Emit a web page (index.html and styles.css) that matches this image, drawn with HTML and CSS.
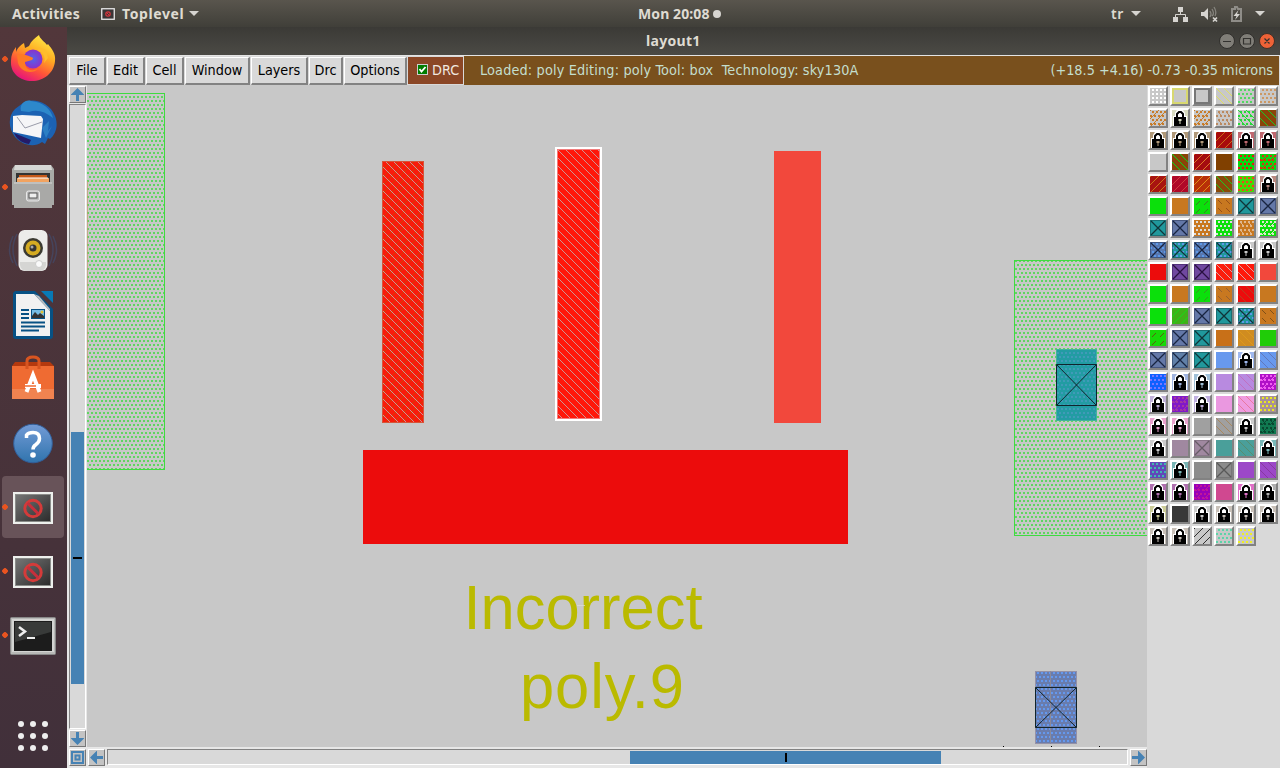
FILE: index.html
```html
<!DOCTYPE html>
<html lang="en">
<head>
<meta charset="utf-8">
<title>layout1</title>
<link rel="stylesheet" href="styles.css">
</head>
<body>
<header class="topbar">
  <span class="activities">Activities</span>
  <svg class="appicon" width="14" height="12" viewBox="0 0 14 12"><rect x=".75" y=".75" width="12.5" height="10.5" fill="#3a3536" stroke="#e8e8e8" stroke-width="1.3"/><circle cx="7" cy="6" r="2.2" fill="none" stroke="#d8353c" stroke-width="1.2"/><path d="M5.500 4.500l3 3" stroke="#d8353c"/></svg>
  <span class="appname">Toplevel</span>
  <i class="caret"></i>
  <span class="clock">Mon 20:08 <i class="dot"></i></span>
  <span class="lang">tr</span>
  <i class="caret"></i>
  <svg class="tray" width="74" height="18" viewBox="1170 4 74 18" fill="#d6d4d0">
    <path d="M1178 6h5v5h-5zM1173 16h5v5h-5zM1183 16h5v5h-5z"/><path d="M1180.500 11v2.500M1175.500 16v-2.500h10V16" fill="none" stroke="#d6d4d0"/>
    <path d="M1201 11h3l4-4v12l-4-4h-3z"/><path d="M1210 10q2 3 0 6M1212 8q3 5 0 7M1214 6q3 5 1 9" fill="none" stroke="#86847e" stroke-width="1.300"/><path d="M1213 16.500l4 4m0-4l-4 4" stroke="#d6d4d0" stroke-width="1.700"/>
    <path d="M1235 6h2l1 2h3v12h-9V8h3z" fill="none" stroke="#8f8d88" stroke-width="2"/><path d="M1238.500 9l-5 6h3l-1.500 4 5-6h-3z"/>
  </svg>
  <i class="caret last"></i>
</header>
<div class="desktop">
  <nav class="dock">
    <div class="slot run"><svg width="48" height="48" viewBox="0 0 48 48">
      <defs><linearGradient id="fx" x1=".8" y1="0" x2=".3" y2="1"><stop offset="0" stop-color="#fff04a"/><stop offset=".4" stop-color="#ffab22"/><stop offset=".7" stop-color="#ff5538"/><stop offset="1" stop-color="#e5117e"/></linearGradient><radialGradient id="fp"><stop offset="0" stop-color="#5263ea"/><stop offset="1" stop-color="#8b31c9"/></radialGradient></defs>
      <path d="M30 0c1 4 5 6 8 10l1-1c4 5 8 10 7 17-1 12-11 20-23 20S1 38 2 26c0-6 2-10 5-14l0 5c2-5 5-7 8-9l1 5 4-2c2-5 6-8 10-11z" fill="url(#fx)"/>
      <circle cx="24" cy="24" r="9.500" fill="url(#fp)"/>
      <path d="M8 20c5-2 10 0 14 2 2 1 3 1 1 3l-7 2c0 7 5 10 13 7-5 5-17 4-20-6z" fill="#ff7a24"/><path d="M29 15c5 2 8 7 6 13l4-5-2-8-7-3z" fill="#ffbd2d"/></svg></div>
    <div class="slot"><svg width="48" height="48" viewBox="0 0 48 48">
      <path d="M14 4C23-2 41 3 46 17c4 10 0 19-5 23l-2-1-3 6-3-2c-8 6-20 3-27-5C-1 29-1 17 6 10z" fill="#1c62b3"/><path d="M12 12C10 5 17 0 22 2c12 1 20 8 22 17-8-7-17-9-24-6z" fill="#2d88cb"/><path d="M4 17l9-1 19 1 2 3-2 19L4 33z" fill="#f5f5f7"/><path d="M8 18l8 11 17-6" fill="none" stroke="#9a9caa"/><path d="M5 34l17 7-2 4C12 44 7 39 5 34z" fill="#251b67"/><path d="M33 29l7-7-1 10 4-5-6 12" fill="#2c7fc4"/></svg></div>
    <div class="slot run"><svg width="48" height="48" viewBox="0 0 48 48">
      <path d="M6 2h36l3 4v36H3V6z" fill="#a8aaa7"/><path d="M6 2h36l1 5H5z" fill="#d7d8d6"/><path d="M7 10h34v10H7z" fill="#333"/><path d="M10 12h28v8H10z" fill="#c65918"/><path d="M8 15h32v5H8z" fill="#f2a360"/><path d="M9 15h30" stroke="#fff"/><path d="M5 19h38v26H5z" fill="#a9a9a7"/><path d="M5 20h38" stroke="#d7d7d6"/><rect x="17.500" y="28" width="13" height="10" rx="2" fill="#bbb" stroke="#e8e8e8"/><rect x="20" y="30" width="8" height="5" fill="#eee" stroke="#555"/></svg></div>
    <div class="slot"><svg width="50" height="48" viewBox="0 0 50 48">
      <g fill="none" stroke="#46445c" stroke-width="1.500"><path d="M9 7q-8 15 0 32M41 7q8 15 0 32M5 9q-7 14 0 27M45 9q7 14 0 27"/></g><rect x="10.500" y="3" width="29" height="41" rx="6" fill="#ececea"/><path d="M12 35v3q1 6 7 6h12q6 0 7-6v-3" fill="#d5d5d3"/><circle cx="25" cy="21" r="10" fill="#3b3a32"/><circle cx="25" cy="21" r="7.500" fill="#d4ab22"/><circle cx="25" cy="21" r="3.500" fill="#333"/><circle cx="24" cy="20" r="1.500" fill="#aaa"/><circle cx="31" cy="37" r="3.500" fill="#fafafa" stroke="#ccc"/></svg></div>
    <div class="slot"><svg width="48" height="48" viewBox="0 0 48 48">
      <path d="M6 0h20l18 18v27q0 3-3 3H7q-3 0-3-3V2z" fill="#075184"/><path d="M7 3h18l16 17v25H7z" fill="#f1f1f1"/><path d="M25 3l16 17v-2L30 5z" fill="#b9bdc0"/><path d="M32 0h12v12z" fill="#0879b5"/><path d="M12 19h8M12 23h8M12 27h8M12 31.500h24M12 35.500h24M12 39.500h18" stroke="#075184" stroke-width="2"/><path d="M22 18h14v10H22z" fill="#075184"/><path d="M23 19h12v8H23z" fill="#75bce4"/><path d="M23 27v-2l3-4 3 3 2-2 4 3v2z" fill="#333"/><circle cx="33" cy="21" r="1.500" fill="#e3c032"/></svg></div>
    <div class="slot"><svg width="48" height="48" viewBox="0 -2 48 48">
      <path d="M6 5h35l4 4H3z" fill="#b4390e"/><path d="M3 9h42v33H3z" fill="#ef6b32"/><path d="M3 32h42v10H3z" fill="#f18350"/><path d="M18 12V4q0-4 6-4t6 4v8" fill="none" stroke="#d85520" stroke-width="3"/><path d="M17.500 35l6.500-17 6.500 17M16 29h16" fill="none" stroke="#fff" stroke-width="4"/><path d="M16 29h11" stroke="#ef6b32" stroke-width="1.500"/></svg></div>
    <div class="slot"><svg width="48" height="48" viewBox="0 0 48 48">
      <defs><linearGradient id="hp" x2="0" y2="1"><stop offset="0" stop-color="#739bd6"/><stop offset="1" stop-color="#3074ad"/></linearGradient></defs><circle cx="24" cy="24.500" r="19.300" fill="url(#hp)" stroke="#315f9b"/><path d="M17.500 19v-3q2-2.500 6.500-2.500 6.500 0 6.500 6 0 3.500-3.500 6-3 2-3 5" fill="none" stroke="#fff" stroke-width="3.500"/><circle cx="24" cy="36" r="2.800" fill="#fff"/></svg></div>
    <div class="slot run active low"><svg width="40" height="32" viewBox="0 0 40 32"><use href="#win"/></svg></div>
    <div class="slot run low"><svg width="40" height="32" viewBox="0 0 40 32">
      <defs><linearGradient id="dk" x2="1" y2="1"><stop offset="0" stop-color="#767676"/><stop offset="1" stop-color="#2b2b2b"/></linearGradient></defs>
      <g id="win"><path d="M0 0h40v32H0z" fill="#eef0ed"/><rect x="2.500" y="2.500" width="35" height="27" fill="url(#dk)" stroke="#8a8c89"/><circle cx="20" cy="16.500" r="8.200" fill="none" stroke="#d43b3a" stroke-width="3"/><path d="M14.500 11l11 11" stroke="#c72f3c" stroke-width="3"/></g></svg></div>
    <div class="slot run low"><svg width="46" height="38" viewBox="0 0 46 38"><rect x=".5" y=".5" width="45" height="37" rx="1" fill="#b8b9b7" stroke="#888"/><rect x="2" y="2" width="42" height="33" fill="#d3d4d2"/><rect x="4" y="4" width="38" height="30" fill="#1c1c1c"/><path d="M5 5h36v10L5 25z" fill="#383a39"/><path d="M9 10l6 4.500L9 19" fill="none" stroke="#eee" stroke-width="2.500"/><path d="M17 21h8" stroke="#eee" stroke-width="2"/></svg></div>
    <svg class="apps" width="32" height="32" viewBox="0 0 32 32" fill="#eee"><circle cx="4" cy="4" r="3"/><circle cx="16" cy="4" r="3"/><circle cx="28" cy="4" r="3"/><circle cx="4" cy="16" r="3"/><circle cx="16" cy="16" r="3"/><circle cx="28" cy="16" r="3"/><circle cx="4" cy="28" r="3"/><circle cx="16" cy="28" r="3"/><circle cx="28" cy="28" r="3"/></svg>
  </nav>
  <main class="window">
    <div class="titlebar"><span class="title">layout1</span>
      <svg class="controls" width="58" height="18" viewBox="0 0 58 18"><circle cx="9" cy="9" r="7.500" fill="#807e78" stroke="#302f2c"/><circle cx="29" cy="9" r="7.500" fill="#807e78" stroke="#302f2c"/><circle cx="49" cy="9" r="7.500" fill="#ee6237" stroke="#403027"/><path d="M5 9.500h8M25.500 6.500h7v5.500h-7zM46.500 6.500l5 5m0-5l-5 5" fill="none" stroke="#33322f" stroke-width="1.200"/></svg>
    </div>
    <div class="menubar">
      <button class="menu file">File</button><button class="menu edit">Edit</button><button class="menu cell">Cell</button><button class="menu win">Window</button><button class="menu layers">Layers</button><button class="menu drcmenu">Drc</button><button class="menu options">Options</button>
      <div class="drc"><svg width="11" height="11" viewBox="0 0 11 11"><path d="M0 0h11v11H0z" fill="#ccc"/><path d="M1 1h9v9H1z" fill="#007c00"/><path d="M2.500 5l2 2.500L8.500 3" fill="none" stroke="#fff" stroke-width="1.800"/></svg><span>DRC</span></div>
      <div class="status"><span class="loaded">Loaded: poly Editing: poly Tool: box&nbsp; Technology: sky130A</span><span class="coords">(+18.5 +4.16) -0.73 -0.35 microns</span></div>
    </div>
    <div class="work">
      <div class="left">
        <div class="upper">
          <div class="vscroll">
            <div class="arrow"><svg width="13" height="13" viewBox="0 0 13 13"><path id="up" d="M6.500 0L13 6.500V7H8v6H5V7H0v-.5z"/></svg></div>
            <div class="vtrough"><div class="vthumb"><i></i></div></div>
            <div class="arrow"><svg width="13" height="13" viewBox="0 0 13 13"><use href="#up" transform="rotate(180 6.500 6.500)"/></svg></div>
          </div>
          <svg class="canvas" width="1060" height="662" viewBox="87 85 1060 662">
            <defs>
              <pattern id="gd" width="4" height="8" patternUnits="userSpaceOnUse"><path d="M1 0h2v2H1zM0 4h1v2H0zM3 4h1v2H3z" fill="#5fd660"/></pattern>
              <pattern id="bd" width="4" height="8" patternUnits="userSpaceOnUse"><path d="M1 0h2v2H1zM0 4h1v2H0zM3 4h1v2H3z" fill="#6498ee"/></pattern>
              <pattern id="td" width="4" height="8" patternUnits="userSpaceOnUse"><path d="M1 0h2v2H1zM0 4h1v2H0zM3 4h1v2H3z" fill="#409ab8"/></pattern>
              <pattern id="bk" width="8" height="8" patternUnits="userSpaceOnUse"><path d="M0 0h1v1H0zM1 1h1v1H1zM2 2h1v1H2zM3 3h1v1H3zM4 4h1v1H4zM5 5h1v1H5zM6 6h1v1H6zM7 7h1v1H7z" fill="#cc9494"/></pattern>
              <pattern id="fw" width="16" height="16" patternUnits="userSpaceOnUse"><path d="M0 16L16 0M-1 9L9-1M7 17L17 7" stroke="#c44700" stroke-width=".8"/></pattern>
            </defs>
            <g shape-rendering="crispEdges">
              <path d="M87 94h77v375H87z" fill="url(#gd)"/><path d="M87 93.500h77.500v376H87" fill="none" stroke="#3fdb40"/><path d="M87.500 181v200" stroke="#c59a6c" opacity=".7"/>
              <path d="M1014 261h133v274h-133z" fill="url(#gd)"/><path d="M1147 260.500h-132.500v275H1147" fill="none" stroke="#3fdb40"/>
              <path d="M382 161h42v262h-42z" fill="#f91b0b"/>
            </g>
            <path d="M382 161h42v262h-42z" fill="url(#fw)"/>
            <g shape-rendering="crispEdges">
              <path d="M382 161h42v262h-42z" fill="url(#bk)"/><path d="M382.500 161.500h41v261h-41z" fill="none" stroke="#d65439"/>
              <path d="M555 147h47v274h-47z" fill="#fff"/><path d="M557 149h43v270h-43z" fill="#ff170a"/><path d="M557 149h43v270h-43z" fill="url(#bk)"/><path d="M557.500 149.500h42v269h-42z" fill="none" stroke="#f27c7c"/>
              <path d="M774 151h47v272h-47z" fill="#f2483c"/>
              <path d="M363 450h485v94H363z" fill="#ec0c0c"/>
              <path d="M1035 671h42v73h-42z" fill="#697cad"/><path d="M1035 671h42v73h-42z" fill="url(#bd)"/><path d="M1035.500 671.500h41v72h-41z" fill="none" stroke="#9391a8"/><path d="M1050.500 671v73" stroke="#8a8999"/>
              <path d="M1056 349h41v72h-41z" fill="#229ca3"/><path d="M1056 349h41v72h-41z" fill="url(#td)"/><path d="M1056.500 349.500h40v71h-40z" fill="none" stroke="#42b49a"/>
              <path d="M1003 747v-1h1v1zM1051 747v-1h1v1zM1099 747v-1h1v1z"/>
            </g>
            <path d="M1035.500 687.500h41v40h-41zl41 40m0-40l-41 40M1056.500 364.500h40v41h-40zl40 41m0-41l-40 41" fill="none" stroke="#10242c"/>
            <text transform="translate(463.500 629) scale(1 1.030)" class="label" textLength="239">Incorrect</text><text transform="translate(520 708) scale(1 1.030)" class="label" textLength="164">poly.9</text>
            <path d="M577 605.500h8" stroke="#ddd" stroke-width=".7"/>
          </svg>
        </div>
        <div class="hscroll">
          <div class="arrow"><svg width="13" height="13" viewBox="0 0 13 13"><path d="M1 1h11v11H1zM4.500 4.500h4v4h-4z" fill="none" stroke="#4682b4" stroke-width="2"/></svg></div>
          <div class="arrow"><svg width="13" height="13" viewBox="0 0 13 13"><use href="#up" transform="rotate(-90 6.500 6.500)"/></svg></div>
          <div class="htrough"><div class="hthumb"><i></i></div></div>
          <div class="arrow"><svg width="13" height="13" viewBox="0 0 13 13"><use href="#up" transform="rotate(90 6.500 6.500)"/></svg></div>
        </div>
      </div>
      <aside class="palette" id="palette"></aside>
    </div>
  </main>
</div>
<script src="palette.js"></script>
</body>
</html>
```
FILE: styles.css
```css
* { box-sizing: border-box; }
body { margin: 0; width: 1280px; height: 768px; overflow: hidden; background: #c8c8c8; font-family: "DejaVu Sans Condensed", "DejaVu Sans", sans-serif; font-stretch: condensed; font-size: 14.3px; }
svg { display: block; flex: none; }
.topbar { height: 27px; display: flex; align-items: center; padding-left: 12px; background: linear-gradient(#59554d, #403f39); color: #dfdbd2; font: 700 14px "Noto Sans", sans-serif; white-space: nowrap; }
.activities { width: 89px; letter-spacing: .3px; }
.appname { width: 67px; margin-left: 7px; letter-spacing: .6px; }
.caret { border: 5px solid transparent; border-top-color: #d6d4d0; border-bottom: 0; }
.clock { display: flex; align-items: center; gap: 3px; margin-left: 439px; width: 473px; letter-spacing: .1px; }
.dot { width: 8px; height: 8px; border-radius: 50%; background: #d6d4d0; }
.lang { width: 20px; font-weight: 600; letter-spacing: .5px; }
.tray { margin-left: 29px; }
.last { margin-left: 11px; }
.desktop { display: flex; height: 741px; }
.dock { width: 67px; display: flex; flex-direction: column; background: linear-gradient(#52373b, #46323a 70%, #41303a); }
.slot { height: 64px; width: 66px; display: flex; align-items: center; justify-content: center; }
.run { background: radial-gradient(circle at 5px 32px, #e95420 2.5px, transparent 3px); }
.active { width: 62px; height: 62px; margin: 1px 2px; border-radius: 4px; background: radial-gradient(circle at 3px 31px, #e95420 2.5px, #685359 3px); }
.low { padding-top: 2px; }
.apps { margin: 53px 0 0 17px; }
.window { width: 1213px; }
.titlebar { height: 28px; display: flex; align-items: center; justify-content: space-between; background: linear-gradient(#3b3a36, #4b4a45); color: #dfdbd2; font: 700 14px "Noto Sans", sans-serif; padding: 0 4px 0 579px; }
.title { letter-spacing: .3px; padding-bottom: 2px; }
.menubar { display: flex; height: 30px; border-top: 1px solid #e4e4e4; padding-left: 2px; background: #d9d9d9; }
.menu { font: inherit; color: #000; margin: 1px 1px 0 0; padding: 0 0 2px; height: 28px; text-align: center; background: #d9d9d9; border: 2px solid; border-color: #fff #828282 #828282 #fff; border-width: 1px 2px 2px 1px; white-space: nowrap; }
.file { width: 37px; } .edit { width: 38px; } .cell { width: 38px; } .win { width: 65px; } .layers { width: 57px; } .drcmenu { width: 34px; } .options { width: 63px; }
.drc { display: flex; align-items: center; gap: 4px; width: 55px; margin: 1px 1px 1px 0; padding: 0 0 2px 9px; background: #8b4726; color: #f1e7e0; }
.status { flex: 1; display: flex; justify-content: space-between; align-items: center; background: #79501d; color: #c4dfce; padding: 0 6px 2px 16px; border-right: 1px solid #ddd; white-space: pre; }
.loaded { letter-spacing: .16px; }
.work { display: flex; height: 683px; }
.left { width: 1080px; }
.upper { display: flex; height: 662px; }
.vscroll { width: 20px; padding: 1px 1px 0 2px; display: flex; flex-direction: column; gap: 1px; background: #e7e7e7; }
.arrow { width: 17px; height: 17px; flex: none; display: grid; place-content: center; background: #c3c3c3; border: 1px solid; border-color: #fff #777 #777 #fff; fill: #4682b4; }
.vtrough { flex: 1; background: #d9d9d9; border: 1px solid; border-color: #828282 #fff #fff #828282; padding: 327px 1px 0; }
.vthumb { height: 252px; background: #4682b4; padding: 125px 2px; }
.vthumb i { display: block; height: 2px; background: #000; }
.canvas { background: #c8c8c8; }
.label { font-family: "Liberation Sans", sans-serif; font-size: 61.5px; fill: #baba00; font-stretch: normal; }
.hscroll { display: flex; gap: 2px; height: 21px; padding: 2px 0 2px 2px; background: #e7e7e7; }
.htrough { flex: 1; border: 1px solid; border-color: #828282 #fff #fff #828282; background: #d9d9d9; padding: 1px 0 1px 522px; height: 16px; }
.hthumb { width: 311px; height: 13px; background: #4682b4; padding: 2px 155px; }
.hthumb i { display: block; width: 2px; height: 9px; background: #000; }
.palette { width: 133px; display: grid; grid-template-columns: repeat(6, 20px); grid-auto-rows: 20px; gap: 2px; align-content: start; padding: 1px 0 0 1px; background: #d9d9d9; }
.swatch { border: 2px solid; border-color: #fff #828282 #828282 #fff; }
```
FILE: palette.js
```js
// One row per line; each entry is base colour, pattern letters, pattern colour.
// G grid, D dots, S slash, B backslash, F sparse slash, K sparse backslash, X cross, O outline, L lock
const rows = `
c8c8c8 G fff|c8c8c8 O d8d870|c8c8c8 O 777|c8c8c8 B e0e060|c8c8c8 D 50d860|c8c8c8 D cc9864
c8c8c8 DS c87c28|d8dbc0 L|c8c8c8 DS c87c28|c8c8c8 DK bb8a60|c8c8c8 DB 24da38|8b4408 B 18c828
b09878 L|b09878 L|b09878 L|a80c0c S cc6c18|c0686f L|c0686f L
c8c8c8|8a4408 B 08d818|a40c10 S e07828|804000|08d810 D e81810|08d810 DF d83010
a81410 S cc7418|b00828 S d03c40|b83008 S e09018|8a4a08 B 20c820|40dc08 D f04818|b88880 L
0be00b|c87820|0be00b F 407828|c87820 K 985018|20989c X 103438|6478a8 X 182440
20989c X 103438|6478a8 X 182440|c87820 D ddd|0be00b D ddd|c87820 DK e0b890|0be00b DF e0e0d0
5878b0 dX 182440|20989c dX 103438|5878b0 dX 182440|20989c dX 103438|c8c8c8 L|c8c8c8 L
ec0c0c|7048a0 X 281040|7048a0 X 281040|fc1c0c B d8a8a8|ff180a B d8a8a8|f2483c
0be00b|c87820|0be00b F 389820|c87820 K 986030|ec0c0c B b84020|c87820
0be00b|40b018 S 18d818|6478a8 X 182440|20989c X 103438|20989c dX 103438|c87820 K 805018
18d808 F 605810|6478a8 X 182440|20989c X 103438|c87018|d08c20 B dc981c|20cc08
6478a8 X 182440|6080a8 X 182440|20989c X 103438|6899ee|9fb8ee L|6899ee B 6078bc
1060ff D 7878ff|a0b4e0 L|a0c0d8 L|b88ae0|b88ae0 B c070c0|b010c8 DF f060f0
c0b0d8 L|8018c8 DF a338a3|c0b0e0 L|ea98e0|ef9ce0 B e878a0|a89098 D e8e820
e8a0cc L|e8a0cc L|a0a0a0|a0a0a0 B a88860|ccc L|107850 DFK 084830
ccc L|a088a0|a088a0 X 665c66|4a9f9a|4a9f9a B 588c70|78b8b8 L
6048b8 D 40b8b0|78b4b4 L|8c8c8c|8c8c8c X 585858|9c48c8|9c48c8 B 8838a0
b070b0 L|b070b0 L|9800b8 DF c0169a|d04890|e070c8 L|b0b0b0 L
cccc98 L|383838|ccc L|c8c0b8 L|c8c0b8 L|c8c0b8 L
c8c0b8 L|c8c0b8 L|c8c8c8 S 303030|c8c8c8 D 5cd4a8|c8c8c8 D f0f020`.trim().split("\n");

// Steps a diagonal one pixel at a time: slope -1 rises to the right, 1 falls.
function diagonal(c, slope, keep = () => true) {
  let d = "";
  for (let y = 0; y < 16; y++)
    for (let x = 0; x < 16; x++)
      if ((x - slope * y + 16) % 8 === 0 && keep(x, y)) d += `M${x} ${y}h1v1h-1z`;
  return `<path d="${d}" fill="${c}"/>`;
}

function dots(c, staggered) {
  let d = "";
  for (let y = 1; y < 16; y += 4)
    for (let x = staggered && (y & 4) ? 0 : 2; x < 16; x += 4) d += `M${x} ${y}h2v2h-2z`;
  return `<path d="${d}" fill="${c}"/>`;
}

const draw = {
  G: c => dots(c, false),
  D: c => dots(c, true),
  d: () => dots("#5c98e8", true),
  O: c => `<rect x="1" y="1" width="14" height="14" fill="none" stroke="${c}" stroke-width="2"/>`,
  S: c => diagonal(c, -1),
  B: c => diagonal(c, 1),
  F: c => diagonal(c, -1, (x, y) => y % 8 > 2 && y % 8 < 7),
  K: c => diagonal(c, 1, (x, y) => y % 8 > 1 && y % 8 < 6),
  X: c => `<path d="M1 1l14 14M15 1L1 15" stroke="${c}" stroke-width="1.300"/><rect x=".5" y=".5" width="15" height="15" fill="none" stroke="${c}" opacity=".4"/>`,
  L: (c, base) => `<path d="M1 6h2V3l2-3h6l2 3v3h2v10H1z" fill="#fff"/>
    <path d="M5 8V4l2-2h2l2 2v4" fill="none" stroke="#000" stroke-width="2"/>
    <path d="M2 7h12v9H2z"/><path d="M6.500 9h3v2h-1v3h-1v-3h-1z" fill="${base}"/>`
};

document.getElementById("palette").innerHTML = rows.flatMap(r => r.split("|")).map(entry => {
  const [base, kinds = "", colour = ""] = entry.split(" ");
  const art = [...kinds].map(k => draw[k]("#" + colour, "#" + base)).join("");
  return `<div class="swatch"><svg width="16" height="16" viewBox="0 0 16 16"><path d="M0 0h16v16H0z" fill="#${base}"/>${art}</svg></div>`;
}).join("");
```
